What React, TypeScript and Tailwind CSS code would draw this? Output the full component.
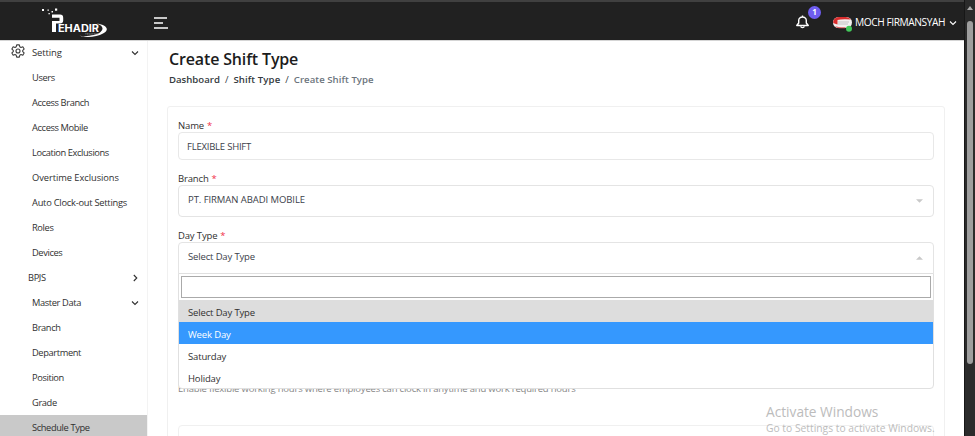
import React from "react";

type Item = { label: string; kind?: "open" | "closed" | "active"; tracking?: string };

const items: Item[] = [
  { label: "Users" },
  { label: "Access Branch" },
  { label: "Access Mobile" },
  { label: "Location Exclusions", tracking: "tracking-[-0.4px]" },
  { label: "Overtime Exclusions", tracking: "tracking-[-0.05px]" },
  { label: "Auto Clock-out Settings", tracking: "tracking-[-0.24px]" },
  { label: "Roles" },
  { label: "Devices" },
  { label: "BPJS", kind: "closed" },
  { label: "Master Data", kind: "open" },
  { label: "Branch" },
  { label: "Department" },
  { label: "Position" },
  { label: "Grade" },
  { label: "Schedule Type", kind: "active" },
];

function Chevron({ right = false, className = "" }: { right?: boolean; className?: string }) {
  return (
    <svg viewBox="0 0 8 8" className={`h-2 w-2 shrink-0 ${className}`} fill="none" stroke="currentColor" strokeWidth="1.1">
      {right ? <path d="M2.8 1 5.8 4 2.8 7" /> : <path d="M1 2.5 4 5.5 7 2.5" />}
    </svg>
  );
}

function Gear() {
  return (
    <svg viewBox="0 0 16 16" className="h-[14px] w-[14px] shrink-0" fill="none" stroke="#3c3c3c" strokeWidth="1.25" strokeLinejoin="round">
      <path d="M6.5 1h3l.5 2.1 1.4.8 2.1-.7 1.5 2.6-1.6 1.4v1.6l1.6 1.4-1.5 2.6-2.1-.7-1.4.8-.5 2.1h-3L6 12.900l-1.400-.8-2.100.7L1 10.200l1.600-1.400V7.200L1 5.800l1.500-2.600 2.100.7L6 3.100z" />
      <circle cx="8" cy="8" r="2.300" />
    </svg>
  );
}

function Logo() {
  return (
    <svg viewBox="0 0 68 33" className="h-[33px] w-[68px]">
      <g fill="#fff">
        <rect x="2" y="4" width="2" height="2" />
        <rect x="7.500" y="4.500" width="1.300" height="1.300" />
        <rect x="8.500" y="8" width="1.300" height="1.300" />
        <rect x="11.500" y="6" width="1.500" height="1.500" />
        <rect x="15" y="3.500" width="2.200" height="2.200" />
        <path d="M12 9.500H20q3.200 0 3.200 3.200v2.800Q23.200 18.500 20 18.500h-4v8.500H12V16h7.500v-3.200H12z" />
        <path d="M57 18.500C67 20 70 25 63 28.500 57.500 32 46 33 39.500 30.800 49 31.500 57 30 60.500 27 64 24 63 20.800 57 18.500z" />
      </g>
      <text x="18" y="26.800" textLength="41" lengthAdjust="spacingAndGlyphs" fontFamily="Inter, sans-serif" fontWeight="700" fontSize="9.700" fill="#fff">EHADIR</text>
      <text x="45" y="29.800" textLength="13" fontFamily="Inter, sans-serif" fontSize="2.600" fill="#aaa">TECHNO</text>
    </svg>
  );
}

function Header() {
  return (
    <header className="flex h-10 items-center border-t-2 border-[#404040] bg-[#212121] text-white">
      <div className="ml-10"><Logo /></div>
      <svg viewBox="0 0 14 12" className="ml-[46px] mt-[3px] h-3 w-[14px]" stroke="white" strokeWidth="1.500">
        <path d="M0 1h13M0 6h9M0 11h14" />
      </svg>
      <div className="relative ml-auto mr-[24px] mt-[1px] h-[14px] w-[13px]">
        <svg viewBox="0 0 12 14" className="h-[14px] w-[13px]" preserveAspectRatio="none" fill="none" stroke="white" strokeWidth="1.300" strokeLinejoin="round">
          <path d="M6 .6v1M.7 10.500 2.500 8V5.500a3.500 3.500 0 0 1 7 0V8l1.800 2.500z" />
          <path d="M4.500 11.200a1.500 1.500 0 0 0 3 0" />
        </svg>
        <span className="absolute left-[12px] top-[-9px] flex h-[13px] w-[13px] items-center justify-center rounded-full bg-[#6f5df0] text-[8px] font-bold leading-none">1</span>
      </div>
      <svg viewBox="0 0 20 16" className="mt-[5px] h-4 w-5">
        <rect x="0" y="1" width="19" height="11" rx="5.500" fill="#f3f0f0" />
        <path d="M.3 5C1.500 2 3.500 1 6 1h7q3 0 5 2.500Q9 2.800 4.500 4v4.500Q2 7.500.2 7z" fill="#d92d2d" />
        <path d="M2 10q3 1.500 11 1.300l-1 .9H6Q3.500 12.200 2 10z" fill="#df6060" />
        <path d="M5 6h11M5 8h10" stroke="#b9b9b9" strokeWidth=".8" />
        <circle cx="16" cy="12.800" r="3" fill="#42c85a" />
      </svg>
      <span className="ml-[2px] mt-[3px] w-[90px] whitespace-nowrap text-[10.200px] tracking-[-0.43px]">MOCH FIRMANSYAH</span>
      <Chevron className="ml-[4px] mr-[7px] mt-[3px]" />
    </header>
  );
}

function Sidebar() {
  return (
    <aside className="w-[148px] shrink-0 border-r border-[#f3f3f3] text-[9.300px] tracking-[-0.38px] text-[#303030]">
      <div className="flex h-6 items-center pl-[11px] pr-[8px]">
        <div className="-mt-1"><Gear /></div>
        <span className="ml-[7px] mt-[1px] flex-1 text-[9.500px] tracking-[-0.15px]">Setting</span>
        <Chevron className="-mt-[1px]" />
      </div>
      {items.map(({ label, kind, tracking = "" }) => (
        <div
          key={label}
          className={`flex h-[25px] items-center justify-between whitespace-nowrap pr-[8px] ${kind === "closed" ? "pl-7" : "pl-8"} ${kind === "active" ? "bg-[#c9c9c9]" : ""}`}
        >
          <span className={tracking}>{label}</span>
          {(kind === "open" || kind === "closed") && <Chevron right={kind === "closed"} />}
        </div>
      ))}
    </aside>
  );
}

function Label({ children }: { children: string }) {
  return <div className="flex h-[14px] items-center text-[#303030]">{children}<span className="ml-[3px] text-[#f0304a]">*</span></div>;
}

function Select({ value, open = false }: { value: string; open?: boolean }) {
  return (
    <div className={`flex h-8 items-center justify-between border border-[#e4e4e4] bg-white pl-[9px] pr-[10px] text-[#3b414a] ${open ? "rounded-t-sm" : "rounded-sm tracking-[-0.07px]"}`}>
      <span className="-mt-[1px]">{value}</span>
      <svg viewBox="0 0 8 4" className="h-1 w-[7px]" fill="#c9c9c9">
        {open ? <path d="M0 4 4 0 8 4z" /> : <path d="M0 0h8L4 4z" />}
      </svg>
    </div>
  );
}

function Options() {
  return (
    <div className="absolute inset-x-0 top-[31px] h-[116px] rounded-b-sm border border-[#e0e0e0] bg-white text-[#303030]">
      <div className="p-[2px]">
        <input className="block h-[22px] w-full border border-[#aaa] outline-none" />
      </div>
      <div className="flex h-[22px] items-center bg-[#ddd] pl-[9px] pt-[4px]">Select Day Type</div>
      <div className="flex h-[22px] items-center bg-[#3598fe] pl-[9px] pt-[4px] text-white">Week Day</div>
      <div className="flex h-[22px] items-center pl-[9px] pt-[4px]">Saturday</div>
      <div className="flex h-[22px] items-center pl-[9px] pt-[4px]">Holiday</div>
    </div>
  );
}

function Main() {
  return (
    <main className="min-w-0 flex-1 pl-[19px] pr-[19px]">
      <h1 className="ml-[2px] mt-[8px] h-5 whitespace-nowrap text-[16px] font-semibold leading-5 tracking-[-0.15px] text-[#1c1c1c]">Create Shift Type</h1>
      <nav className="ml-[2px] mt-[4px] flex h-[14px] items-center gap-[5px] whitespace-nowrap text-[9.600px] font-semibold text-[#343a40]">
        <span>Dashboard</span><span className="font-normal">/</span>
        <span className="tracking-[0.1px]">Shift Type</span><span className="font-normal">/</span>
        <span className="tracking-[0.05px] text-[#6c757d]">Create Shift Type</span>
      </nav>
      <section className="mt-[19px] h-[340px] rounded-[3px] border border-[#f0f0f0] px-[10px] pt-3 text-[9.500px] tracking-[-0.15px]">
        <Label>Name</Label>
        <div className="-mt-[1px] flex h-7 items-center rounded-sm border border-[#e8e8e8] pl-[8px] pt-[3px] tracking-[-0.22px] text-[#3b414a]">FLEXIBLE SHIFT</div>
        <div className="mt-[12px]"><Label>Branch</Label></div>
        <div className="-mt-[1px]"><Select value="PT. FIRMAN ABADI MOBILE" /></div>
        <div className="mt-[12px]"><Label>Day Type</Label></div>
        <div className="relative -mt-[1px]">
          <Select value="Select Day Type" open />
          <Options />
        </div>
        <p className="mt-[108px] flex h-[14px] items-center whitespace-nowrap tracking-[-0.2px] text-[#858585]">Enable flexible working hours where employees can clock in anytime and work required hours</p>
        <div className="mt-[29px] h-5 rounded-sm border border-[#f0f0f0]" />
      </section>
    </main>
  );
}

function Scrollbar() {
  return (
    <div className="flex w-[11px] shrink-0 flex-col border-l border-[#171717] bg-[#2b2b2b] pl-[2px] pt-[6px]">
      <svg viewBox="0 0 6 4" className="h-[4px] w-[6px]" fill="#aaa"><path d="M0 4 3 0 6 4z" /></svg>
      <div className="mt-[11px] h-[343px] w-[6px] rounded-full bg-[#9e9e9e]" />
    </div>
  );
}

export default function App() {
  return (
    <div className="relative flex h-[436px] w-[975px] overflow-hidden bg-white font-['Open_Sans','Noto_Sans',sans-serif]">
      <div className="flex min-w-0 flex-1 flex-col">
        <Header />
        <div className="flex min-h-0 flex-1 overflow-hidden border-t border-[#d5d5d5]">
          <Sidebar />
          <Main />
        </div>
      </div>
      <Scrollbar />
      <div className="pointer-events-none absolute left-[766px] top-[403px] whitespace-nowrap text-[#bcbcbc]">
        <div className="text-[13.700px] leading-[18px]">Activate Windows</div>
        <div className="text-[10.300px] leading-[14px]">Go to Settings to activate Windows.</div>
      </div>
    </div>
  );
}
